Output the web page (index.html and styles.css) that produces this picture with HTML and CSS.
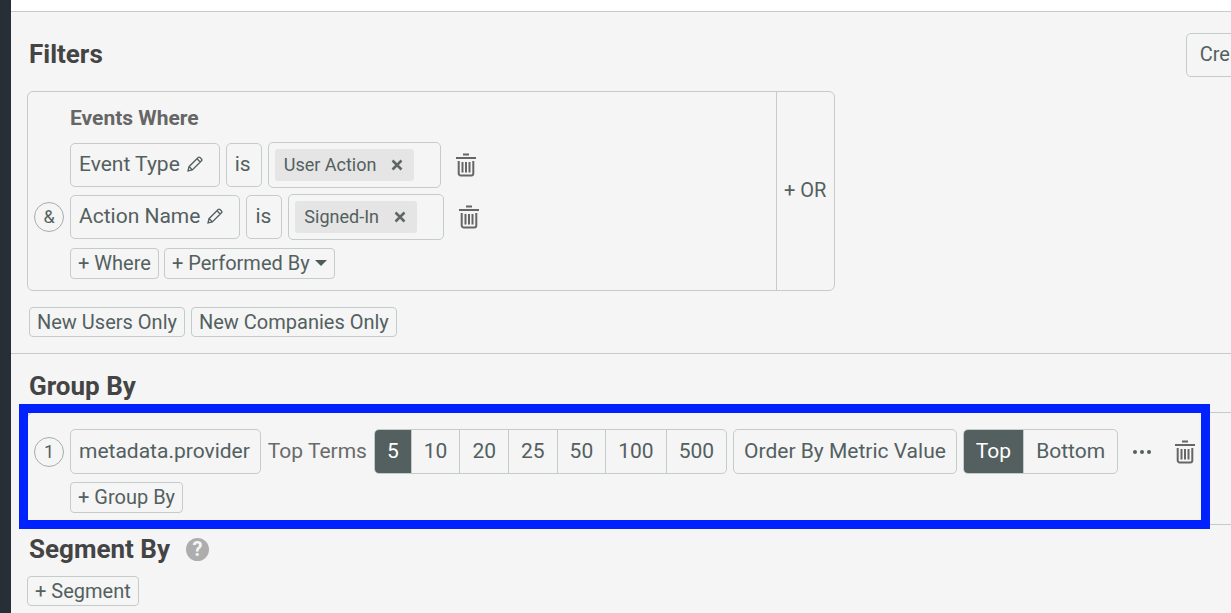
FILE: index.html
```
<!DOCTYPE html>
<html lang="en">
<head>
    <meta charset="UTF-8">
    <meta name="viewport" content="width=device-width, initial-scale=1.0">
    <title>Filters</title>
    <link rel="stylesheet" href="styles.css">
</head>
<body>
    <!-- shared icons -->
    <svg class="sprite" aria-hidden="true">
        <symbol id="icon-trash" viewBox="0 0 22 24">
            <path d="M8 1.500h6M1 5h20" stroke-width="2.200"/>
            <path d="M3.700 8v12.500a2 2 0 0 0 2 2h10.600a2 2 0 0 0 2-2V8M7.500 9v10.500M11 9v10.500M14.500 9v10.500" stroke-width="2"/>
        </symbol>
        <symbol id="icon-pencil" viewBox="0 0 16 16">
            <path d="M1 15l1-4.300L11.200 1.500a1.300 1.300 0 0 1 1.800 0l1.500 1.500a1.300 1.300 0 0 1 0 1.800L5.300 14zM10 2.800l3.200 3.200M2.300 10.800l2.800 2.800" stroke-width="1.300"/>
        </symbol>
        <symbol id="icon-close" viewBox="0 0 12 12">
            <path d="M1.500 1.500l9 9M10.500 1.500l-9 9" stroke-width="2.500"/>
        </symbol>
    </svg>
    <aside class="sidebar"></aside>
    <main>
        <section class="filters">
            <header>
                <h1>Filters</h1>
                <button class="field create">Create</button>
            </header>
            <div class="filter-box">
                <div class="conditions">
                    <h2>Events Where</h2>
                    <div class="row">
                        <span class="lead"></span>
                        <button class="field edit">Event Type <svg class="pencil"><use href="#icon-pencil"/></svg></button>
                        <button class="field">is</button>
                        <div class="tokens">
                            <span class="token">User Action <button aria-label="Remove User Action"><svg><use href="#icon-close"/></svg></button></span>
                            <input type="text" aria-label="Event Type value">
                        </div>
                        <button class="trash" aria-label="Delete"><svg><use href="#icon-trash"/></svg></button>
                    </div>
                    <div class="row">
                        <span class="lead circle">&amp;</span>
                        <button class="field edit">Action Name <svg class="pencil"><use href="#icon-pencil"/></svg></button>
                        <button class="field">is</button>
                        <div class="tokens">
                            <span class="token">Signed-In <button aria-label="Remove Signed-In"><svg><use href="#icon-close"/></svg></button></span>
                            <input type="text" aria-label="Action Name value">
                        </div>
                        <button class="trash" aria-label="Delete"><svg><use href="#icon-trash"/></svg></button>
                    </div>
                    <div class="actions">
                        <button class="small">+ Where</button>
                        <button class="small">+ Performed By <span class="caret"></span></button>
                    </div>
                </div>
                <button class="or">+ OR</button>
            </div>
            <div class="only">
                <button class="small">New Users Only</button>
                <button class="small">New Companies Only</button>
            </div>
        </section>
        <section class="group-by">
            <h1>Group By</h1>
            <div class="group-box">
                <div class="row">
                    <span class="lead circle">1</span>
                    <button class="field">metadata.provider</button>
                    <span class="terms">Top Terms</span>
                    <div class="segmented">
                        <button class="active">5</button>
                        <button>10</button>
                        <button>20</button>
                        <button>25</button>
                        <button>50</button>
                        <button>100</button>
                        <button>500</button>
                    </div>
                    <button class="field order">Order By Metric Value</button>
                    <div class="segmented">
                        <button class="active">Top</button>
                        <button>Bottom</button>
                    </div>
                    <button class="more" aria-label="More"><span></span><span></span><span></span></button>
                    <button class="trash" aria-label="Delete"><svg><use href="#icon-trash"/></svg></button>
                </div>
                <div class="actions">
                    <button class="small">+ Group By</button>
                </div>
                <div class="highlight"></div>
            </div>
        </section>
        <section class="segment-by">
            <h1>Segment By <button class="help" aria-label="Help">?</button></h1>
            <button class="small">+ Segment</button>
        </section>
    </main>
</body>
</html>
```
FILE: styles.css
```
* {
    box-sizing: border-box;
}

body {
    display: flex;
    min-height: 100vh;
    margin: 0;
    font-family: Roboto, sans-serif;
    font-size: 20px;
    line-height: 24px;
    color: #536060;
    background-color: #f5f5f5;
    overflow: hidden;
}

h1, h2 {
    margin: 0;
}

h1 {
    font-size: 26px;
    line-height: 32px;
    color: #444;
}

h2 {
    font-size: 21px;
    line-height: 24px;
    color: #666;
}

button {
    display: flex;
    align-items: center;
    flex: none;
    padding: 0;
    border: 0;
    background: none;
    font: inherit;
    color: inherit;
    white-space: nowrap;
    cursor: pointer;
}

svg {
    fill: none;
    stroke: currentColor;
}

.sprite {
    position: absolute;
    width: 0;
    height: 0;
}

.sidebar {
    flex: none;
    width: 11px;
    background-color: #272e35;
}

main {
    flex: 1;
    min-width: 0;
    border-top: 11px solid #fff;
}

section {
    padding-left: 16px;
    border-top: 1px solid #c4cccb;
}

.filters header {
    display: flex;
    align-items: center;
    justify-content: space-between;
    margin-right: -41px;
    padding: 21px 0 14px 2px;
}

.filters h1 {
    padding-bottom: 2px;
}

.field, .small, .tokens, .segmented {
    border: 1px solid #c4cccb;
    border-radius: 5px;
}

.field {
    height: 44px;
    padding: 0 10px 2px 8px;
    font-size: 21px;
}

.create {
    padding: 0 13px 2px;
    font-size: 20px;
}

.small {
    height: 31px;
    padding: 0 7px 2px;
    border-radius: 4px;
}

.edit {
    padding-right: 16px;
}

.pencil {
    width: 16px;
    height: 16px;
    margin-left: 7px;
}

.filter-box {
    display: flex;
    width: fit-content;
    border: 1px solid #c4cccb;
    border-radius: 6px;
}

.conditions {
    width: 748px;
    padding: 14px 0 11px 6px;
}

.conditions h2 {
    margin: 0 0 12px 36px;
}

.row {
    display: flex;
    align-items: center;
    gap: 6px;
}

.row + .row {
    margin-top: 6px;
}

.actions {
    display: flex;
    gap: 5px;
    margin: 8px 0 0 36px;
}

.lead {
    flex: none;
    width: 30px;
}

.circle {
    height: 30px;
    border: 1px solid #a5adac;
    border-radius: 50%;
    font-size: 18px;
    line-height: 28px;
    text-align: center;
}

.tokens {
    display: flex;
    padding: 6px 0 6px 6px;
}

.token {
    display: flex;
    align-items: center;
    height: 32px;
    padding: 0 11px 0 9px;
    border-radius: 3px;
    background-color: #e5e5e5;
    font-size: 18px;
}

.token button {
    margin-left: 15px;
    color: #606666;
}

.token svg {
    width: 12px;
    height: 12px;
}

.tokens input {
    width: 26px;
    padding: 0;
    border: 0;
    background: none;
}

.trash {
    margin-left: 8px;
    color: #666;
}

.trash svg {
    width: 22px;
    height: 24px;
}

.caret {
    margin-left: 5px;
    border: 6px solid transparent;
    border-top-color: #4c5c5a;
    border-bottom: 0;
}

.or {
    padding: 0 8px 2px 7px;
    border-left: 1px solid #c4cccb;
}

.only {
    display: flex;
    gap: 6px;
    padding: 16px 0 16px 2px;
}

.only .small, .segment-by .small {
    height: 30px;
    padding-bottom: 1px;
}

.group-by {
    padding-top: 16px;
}

.group-by h1, .segment-by h1 {
    padding-left: 2px;
}

.group-box {
    position: relative;
    margin-top: 10px;
    padding: 16px 0 11px 6px;
    border: 1px solid #c4cccb;
    border-right: 0;
    border-radius: 6px 0 0 6px;
}

/* frame drawn over the group box */
.highlight {
    position: absolute;
    inset: -9px 21px -5px -9px;
    border: 9px solid #0022ff;
    pointer-events: none;
}

.group-box .field {
    height: 45px;
}

.group-box .order {
    padding: 0 10px 2px;
}

.terms {
    padding: 0 1px 2px;
    font-size: 21px;
    color: #6a6a6a;
    white-space: nowrap;
}

.segmented {
    display: flex;
    overflow: hidden;
}

.segmented button {
    height: 43px;
    padding: 0 12px 2px;
    font-size: 21px;
}

.segmented button + button {
    border-left: 1px solid #c4cccb;
}

.segmented .active {
    background-color: #53605f;
    color: #fff;
}

.more {
    gap: 3px;
    margin: 0 9px;
}

.more span {
    width: 4px;
    height: 4px;
    border-radius: 50%;
    background-color: #53605f;
}

.segment-by {
    border: 0;
    padding-top: 8px;
}

.segment-by h1 {
    display: flex;
    align-items: center;
    margin-bottom: 11px;
}

.help {
    justify-content: center;
    width: 23px;
    height: 23px;
    margin-left: 16px;
    border-radius: 50%;
    background-color: #adadad;
    color: #f5f5f5;
    font-size: 20px;
    font-weight: bold;
}
```
